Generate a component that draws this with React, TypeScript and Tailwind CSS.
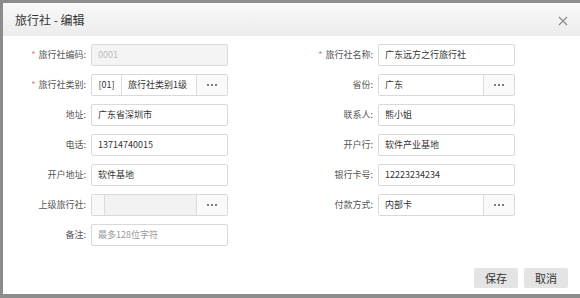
const font = { fontFamily: '"Noto Sans CJK SC", "Liberation Sans", sans-serif' };

type Field =
  | { kind: "text"; value: string; placeholder?: boolean; disabled?: boolean }
  | { kind: "pick"; code?: string; value: string; disabled?: boolean };

type Row = { label: string; required?: boolean; field: Field };

const left: Row[] = [
  { label: "旅行社编码", required: true, field: { kind: "text", value: "0001", disabled: true } },
  { label: "旅行社类别", required: true, field: { kind: "pick", code: "[01]", value: "旅行社类别1级" } },
  { label: "地址", field: { kind: "text", value: "广东省深圳市" } },
  { label: "电话", field: { kind: "text", value: "13714740015" } },
  { label: "开户地址", field: { kind: "text", value: "软件基地" } },
  { label: "上级旅行社", field: { kind: "pick", code: "", value: "", disabled: true } },
  { label: "备注", field: { kind: "text", value: "最多128位字符", placeholder: true } },
];

const right: Row[] = [
  { label: "旅行社名称", required: true, field: { kind: "text", value: "广东远方之行旅行社" } },
  { label: "省份", field: { kind: "pick", value: "广东" } },
  { label: "联系人", field: { kind: "text", value: "熊小姐" } },
  { label: "开户行", field: { kind: "text", value: "软件产业基地" } },
  { label: "银行卡号", field: { kind: "text", value: "12223234234" } },
  { label: "付款方式", field: { kind: "pick", value: "内部卡" } },
];

function Dots() {
  return (
    <div className="flex w-[31px] shrink-0 items-center justify-center gap-[2px] self-stretch border-l border-[#dcdcdc] bg-[#fafafa]">
      <span className="h-[2px] w-[2px] rounded-full bg-[#555]" />
      <span className="h-[2px] w-[2px] rounded-full bg-[#555]" />
      <span className="h-[2px] w-[2px] rounded-full bg-[#555]" />
    </div>
  );
}

function Input({ field }: { field: Field }) {
  if (field.kind === "text") {
    return (
      <div
        className={`flex h-[22px] w-[137px] items-center rounded-[2px] border border-[#d9d9d9] px-[6px] text-[9px] ${
          field.disabled ? "bg-[#f4f4f4] text-[#bbb]" : field.placeholder ? "bg-white text-[#999]" : "bg-white text-[#333]"
        }`}
      >
        {field.value}
      </div>
    );
  }
  return (
    <div className="flex h-[22px] w-[137px] items-center overflow-hidden rounded-[2px] border border-[#d9d9d9] text-[9px] text-[#333]">
      {field.code !== undefined && (
        <div
          className={`flex items-center justify-center self-stretch border-r border-[#dcdcdc] ${
            field.code ? "w-[30px] bg-white" : "w-[13px] bg-[#f8f8f8]"
          }`}
        >
          {field.code}
        </div>
      )}
      <div
        className={`flex flex-1 items-center self-stretch px-[6px] ${field.disabled ? "bg-[#f2f2f2]" : "bg-white"}`}
      >
        {field.value}
      </div>
      <Dots />
    </div>
  );
}

function Label({ row, width }: { row: Row; width: string }) {
  return (
    <div className={`${width} flex shrink-0 items-center justify-end pr-[5px] text-[9px] text-[#555]`}>
      {row.required && <span className="mr-[3px] text-[#f07070]">*</span>}
      {row.label}:
    </div>
  );
}

export default function App() {
  return (
    <div className="h-[298px] w-[580px] bg-[#8c8c8c] pb-[4px] pl-[3px] pt-[3px]" style={font}>
      <div className="flex h-full flex-col bg-white">
        <div className="flex h-[33px] shrink-0 items-center justify-between bg-gradient-to-b from-[#f9f9f9] to-[#ececec] pl-[12px] pr-[12px]">
          <span className="text-[12px] text-[#333]">旅行社 - 编辑</span>
          <svg width="10" height="10" viewBox="0 0 10 10" className="mt-[2px]">
            <path d="M1 1L9 9M9 1L1 9" stroke="#888" strokeWidth="1.1" />
          </svg>
        </div>

        <div className="flex flex-col gap-[8px] pt-[8px]">
          {left.map((row, i) => (
            <div key={i} className="flex h-[22px] items-stretch">
              <Label row={row} width="w-[88px]" />
              <Input field={row.field} />
              {right[i] ? (
                <>
                  <Label row={right[i]} width="w-[150px]" />
                  <Input field={right[i].field} />
                </>
              ) : null}
            </div>
          ))}
        </div>

        <div className="mt-auto flex justify-end gap-[6px] pb-[6px] pr-[12px]">
          <button className="h-[20px] w-[44px] rounded-[2px] bg-[#e4e4e4] text-[11px] text-[#333]">保存</button>
          <button className="h-[20px] w-[44px] rounded-[2px] bg-[#e4e4e4] text-[11px] text-[#333]">取消</button>
        </div>
      </div>
    </div>
  );
}
